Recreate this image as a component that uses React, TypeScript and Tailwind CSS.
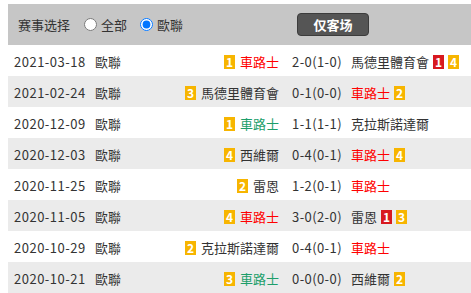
import React from 'react';

type Badge = { n: number; red?: boolean };
type Match = {
  date: string;
  home: string;
  homeColor?: string;
  homeBadges: Badge[];
  score: string;
  away: string;
  awayColor?: string;
  awayBadges: Badge[];
};

const RED = 'text-[#ff0000]';
const GREEN = 'text-[#1c9e6a]';

const matches: Match[] = [
  { date: '2021-03-18', home: '車路士', homeColor: RED, homeBadges: [{ n: 1 }], score: '2-0(1-0)', away: '馬德里體育會', awayBadges: [{ n: 1, red: true }, { n: 4 }] },
  { date: '2021-02-24', home: '馬德里體育會', homeBadges: [{ n: 3 }], score: '0-1(0-0)', away: '車路士', awayColor: RED, awayBadges: [{ n: 2 }] },
  { date: '2020-12-09', home: '車路士', homeColor: GREEN, homeBadges: [{ n: 1 }], score: '1-1(1-1)', away: '克拉斯諾達爾', awayBadges: [] },
  { date: '2020-12-03', home: '西維爾', homeBadges: [{ n: 4 }], score: '0-4(0-1)', away: '車路士', awayColor: RED, awayBadges: [{ n: 4 }] },
  { date: '2020-11-25', home: '雷恩', homeBadges: [{ n: 2 }], score: '1-2(0-1)', away: '車路士', awayColor: RED, awayBadges: [] },
  { date: '2020-11-05', home: '車路士', homeColor: RED, homeBadges: [{ n: 4 }], score: '3-0(2-0)', away: '雷恩', awayBadges: [{ n: 1, red: true }, { n: 3 }] },
  { date: '2020-10-29', home: '克拉斯諾達爾', homeBadges: [{ n: 2 }], score: '0-4(0-1)', away: '車路士', awayColor: RED, awayBadges: [] },
  { date: '2020-10-21', home: '車路士', homeColor: GREEN, homeBadges: [{ n: 3 }], score: '0-0(0-0)', away: '西維爾', awayBadges: [{ n: 2 }] },
];

const Card = ({ b }: { b: Badge }) => (
  <span
    className={`inline-flex h-[14px] min-w-[11px] items-center justify-center px-[2px] text-[12px] font-bold leading-none text-white ${
      b.red ? 'bg-[#d8191f]' : 'bg-[#f7b500]'
    }`}
  >
    {b.n}
  </span>
);

const App = () => {
  return (
    <div
      className="min-h-[293px] bg-white pl-[8px] pt-[4px] text-[13px] text-[#333]"
      style={{ fontFamily: '"Noto Sans CJK SC", "Noto Sans", sans-serif' }}
    >
      <div className="w-[463px]">
        {/* filter bar */}
        <div className="flex h-[41px] items-center bg-[#c6c6c6] pl-[10px]">
          <span>赛事选择</span>
          <label className="ml-[14px] flex items-center">
            <input type="radio" name="league" className="m-0 h-[13px] w-[13px]" />
            <span className="ml-[4px]">全部</span>
          </label>
          <label className="ml-[13px] flex items-center">
            <input type="radio" name="league" defaultChecked className="m-0 h-[13px] w-[13px]" />
            <span className="ml-[4px]">歐聯</span>
          </label>
          <button className="ml-[114px] h-[23px] w-[72px] rounded-[4px] border border-[#3c3c3c] bg-[#555] text-[13px] font-bold text-white">
            仅客场
          </button>
        </div>

        {/* match rows */}
        {matches.map((m, i) => (
          <div
            key={m.date}
            className={`flex h-[31px] items-center whitespace-nowrap pt-[2px] ${i % 2 === 1 ? 'bg-[#ebebeb]' : 'bg-white'}`}
          >
            <div className="w-[87px] pl-[6px] tracking-[0.5px]">{m.date}</div>
            <div className="w-[40px]">歐聯</div>
            <div className="flex flex-1 items-center justify-end gap-[5px] pr-[5px]">
              {m.homeBadges.map((b, k) => (
                <Card key={k} b={b} />
              ))}
              <span className={m.homeColor}>{m.home}</span>
            </div>
            <div className="w-[66px] text-center tracking-[0.4px]">{m.score}</div>
            <div className="flex w-[121px] items-center gap-[4px] pl-[1px]">
              <span className={m.awayColor}>{m.away}</span>
              {m.awayBadges.map((b, k) => (
                <Card key={k} b={b} />
              ))}
            </div>
          </div>
        ))}
      </div>
    </div>
  );
};

export default App;
